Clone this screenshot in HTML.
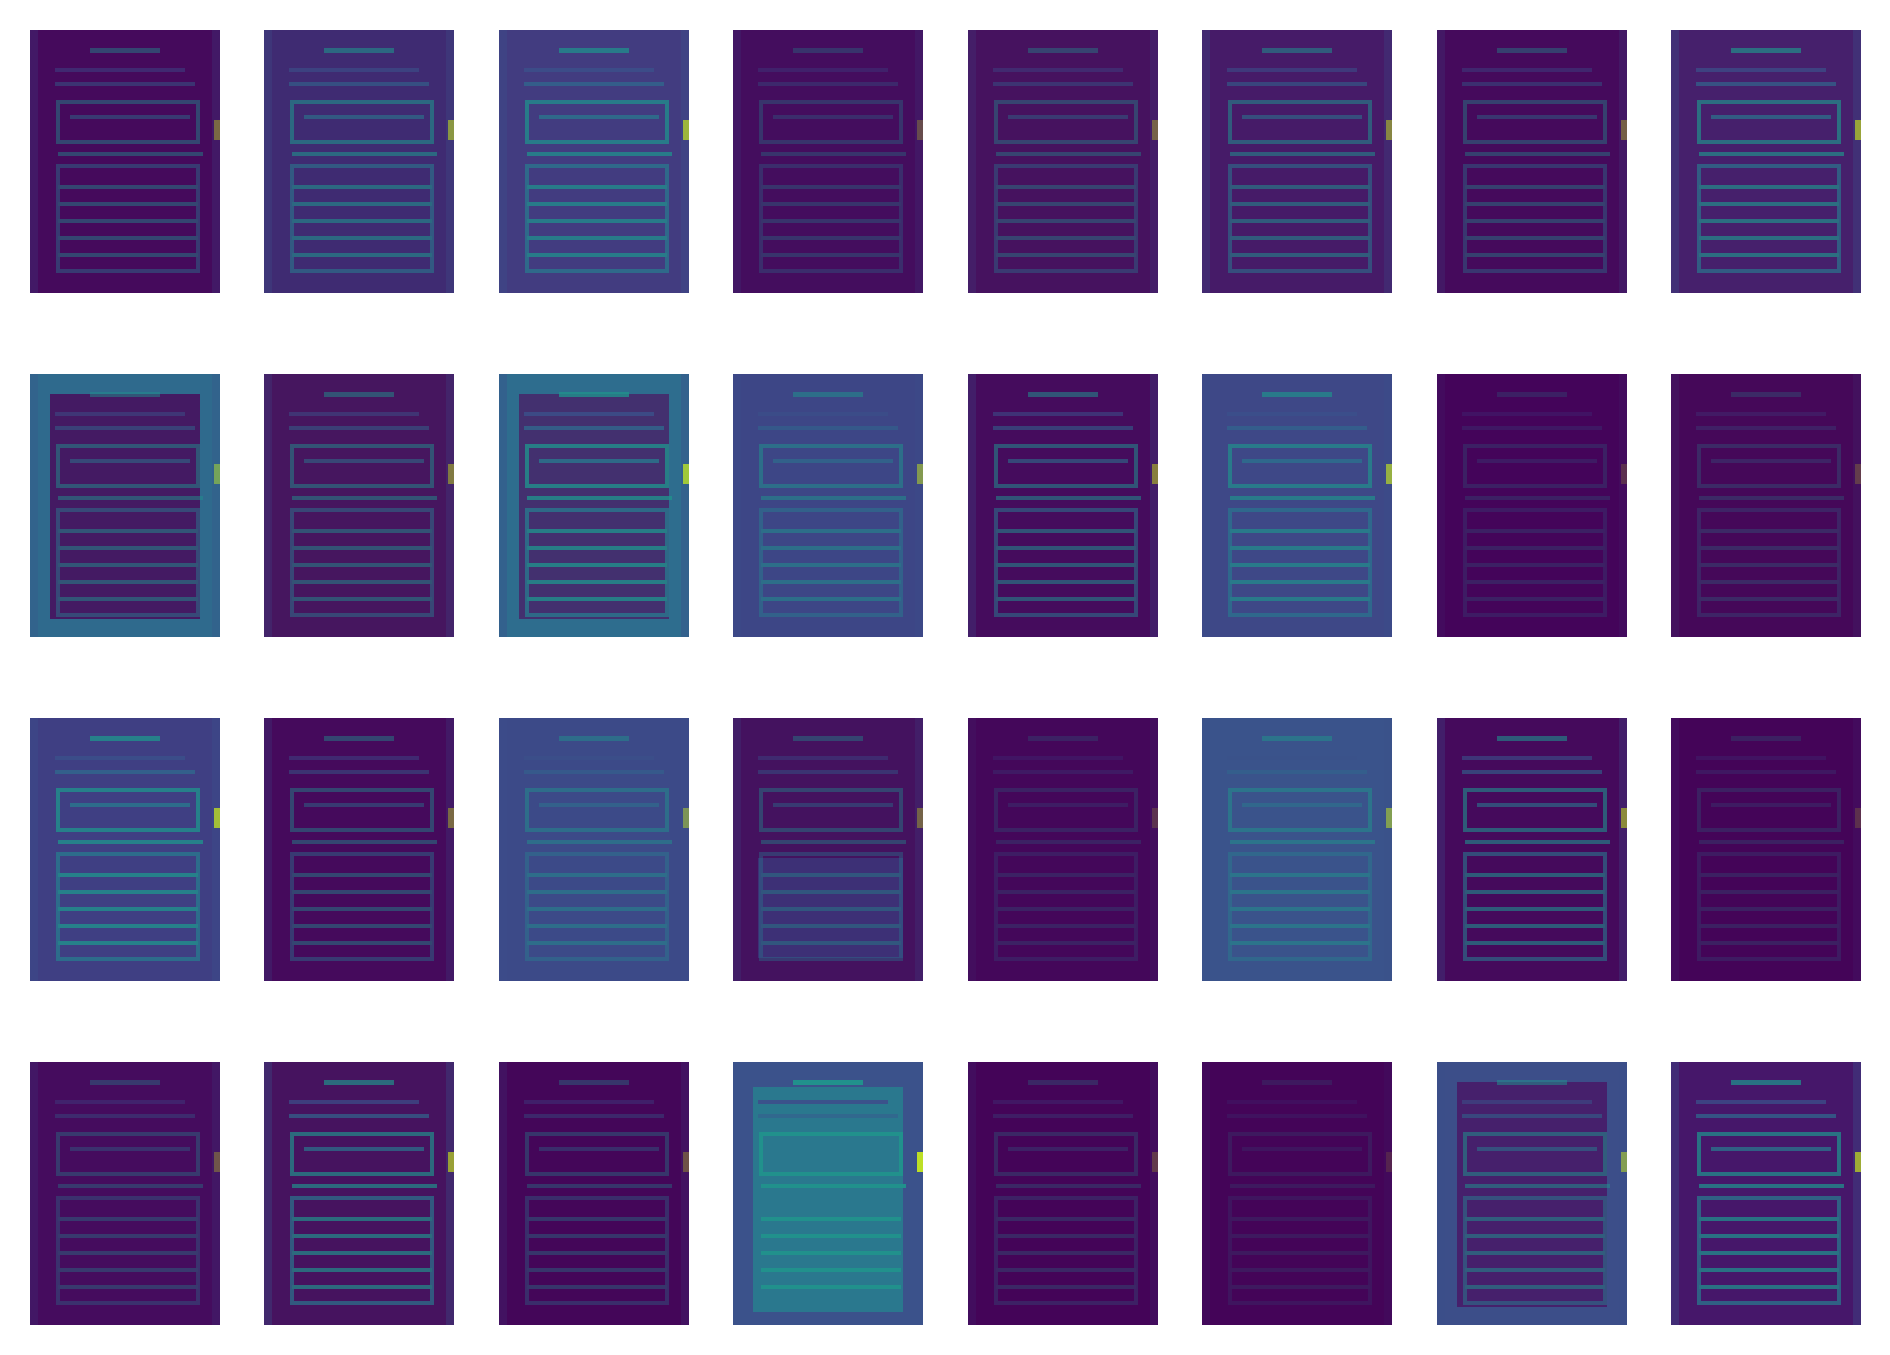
<!DOCTYPE html>
<html><head><meta charset="utf-8"><style>
html,body{margin:0;padding:0;background:#fff;width:1890px;height:1355px;overflow:hidden}
svg{display:block}
</style></head><body>
<svg width="1890" height="1355" viewBox="0 0 1890 1355" xmlns="http://www.w3.org/2000/svg">
<defs>
<g id="doc">
<rect x="0" y="0" width="8" height="263" fill="#3b528b" opacity="0.5"/>
<rect x="182" y="0" width="8" height="263" fill="#3b528b" opacity="0.5"/>
<rect x="60" y="18" width="70" height="5" fill="#21918c"/>
<rect x="25" y="38" width="130" height="4" fill="#3b528b"/>
<rect x="25" y="52" width="140" height="4" fill="#31688e"/>
<rect x="28" y="72" width="140" height="40" fill="none" stroke="#21918c" stroke-width="4"/>
<rect x="40" y="85" width="120" height="4" fill="#2a788e"/>
<rect x="28" y="122" width="145" height="4" fill="#21918c"/>
<rect x="28" y="136" width="140" height="105" fill="none" stroke="#2a788e" stroke-width="4"/>
<rect x="28" y="155" width="140" height="4" fill="#21918c"/>
<rect x="28" y="172" width="140" height="4" fill="#21918c"/>
<rect x="28" y="189" width="140" height="4" fill="#21918c"/>
<rect x="28" y="206" width="140" height="4" fill="#21918c"/>
<rect x="28" y="223" width="140" height="4" fill="#21918c"/>
<rect x="184" y="90" width="6" height="20" fill="#bddf26"/>
</g>
</defs>
<g id="panels"></g>
<!-- row 1 -->
<g transform="translate(30,30)"><rect width="190" height="263" fill="#450a5c"/><use href="#doc" opacity="0.45"/></g>
<g transform="translate(264,30)"><rect width="190" height="263" fill="#3f2b72"/><use href="#doc" opacity="0.6"/></g>
<g transform="translate(499,30)"><rect width="190" height="263" fill="#423c80"/><use href="#doc" opacity="0.75"/></g>
<g transform="translate(733,30)"><rect width="190" height="263" fill="#440d5e"/><use href="#doc" opacity="0.3"/></g>
<g transform="translate(968,30)"><rect width="190" height="263" fill="#46125f"/><use href="#doc" opacity="0.4"/></g>
<g transform="translate(1202,30)"><rect width="190" height="263" fill="#461b68"/><use href="#doc" opacity="0.55"/></g>
<g transform="translate(1437,30)"><rect width="190" height="263" fill="#450a5c"/><use href="#doc" opacity="0.4"/></g>
<g transform="translate(1671,30)"><rect width="190" height="263" fill="#46206c"/><use href="#doc" opacity="0.7"/></g>
<!-- row 2 -->
<g transform="translate(30,374)"><rect width="190" height="263" fill="#2f6a8d"/><rect x="20" y="20" width="150" height="225" fill="#441a63"/><use href="#doc" opacity="0.5"/></g>
<g transform="translate(264,374)"><rect width="190" height="263" fill="#46165f"/><use href="#doc" opacity="0.5"/></g>
<g transform="translate(499,374)"><rect width="190" height="263" fill="#2e6d8e"/><rect x="20" y="20" width="150" height="225" fill="#43306f"/><use href="#doc" opacity="0.8"/></g>
<g transform="translate(733,374)"><rect width="190" height="263" fill="#3d4686"/><use href="#doc" opacity="0.55"/></g>
<g transform="translate(968,374)"><rect width="190" height="263" fill="#450c5d"/><use href="#doc" opacity="0.55"/></g>
<g transform="translate(1202,374)"><rect width="190" height="263" fill="#3e4887"/><use href="#doc" opacity="0.7"/></g>
<g transform="translate(1437,374)"><rect width="190" height="263" fill="#44045a"/><use href="#doc" opacity="0.2"/></g>
<g transform="translate(1671,374)"><rect width="190" height="263" fill="#450859"/><use href="#doc" opacity="0.25"/></g>
<!-- row 3 -->
<g transform="translate(30,718)"><rect width="190" height="263" fill="#3f3f83"/><use href="#doc" opacity="0.8"/></g>
<g transform="translate(264,718)"><rect width="190" height="263" fill="#450a5c"/><use href="#doc" opacity="0.45"/></g>
<g transform="translate(499,718)"><rect width="190" height="263" fill="#3c4a88"/><use href="#doc" opacity="0.5"/></g>
<g transform="translate(733,718)"><rect width="190" height="263" fill="#44125f"/><rect x="25" y="140" width="145" height="100" fill="#3b3d80" opacity="0.7"/><use href="#doc" opacity="0.4"/></g>
<g transform="translate(968,718)"><rect width="190" height="263" fill="#44075a"/><use href="#doc" opacity="0.2"/></g>
<g transform="translate(1202,718)"><rect width="190" height="263" fill="#3a538b"/><use href="#doc" opacity="0.55"/></g>
<g transform="translate(1437,718)"><rect width="190" height="263" fill="#450a5c"/><use href="#doc" opacity="0.6"/></g>
<g transform="translate(1671,718)"><rect width="190" height="263" fill="#440458"/><use href="#doc" opacity="0.2"/></g>
<!-- row 4 -->
<g transform="translate(30,1062)"><rect width="190" height="263" fill="#450c5e"/><use href="#doc" opacity="0.35"/></g>
<g transform="translate(264,1062)"><rect width="190" height="263" fill="#46135f"/><use href="#doc" opacity="0.7"/></g>
<g transform="translate(499,1062)"><rect width="190" height="263" fill="#440659"/><use href="#doc" opacity="0.35"/></g>
<g transform="translate(733,1062)"><rect width="190" height="263" fill="#3b528b"/><rect x="20" y="25" width="150" height="225" fill="#2a788e"/><use href="#doc" opacity="1"/></g>
<g transform="translate(968,1062)"><rect width="190" height="263" fill="#440458"/><use href="#doc" opacity="0.25"/></g>
<g transform="translate(1202,1062)"><rect width="190" height="263" fill="#440458"/><use href="#doc" opacity="0.15"/></g>
<g transform="translate(1437,1062)"><rect width="190" height="263" fill="#3c4e89"/><rect x="20" y="20" width="150" height="225" fill="#46206c"/><use href="#doc" opacity="0.55"/></g>
<g transform="translate(1671,1062)"><rect width="190" height="263" fill="#46176a"/><use href="#doc" opacity="0.75"/></g>
</svg>
</body></html>
